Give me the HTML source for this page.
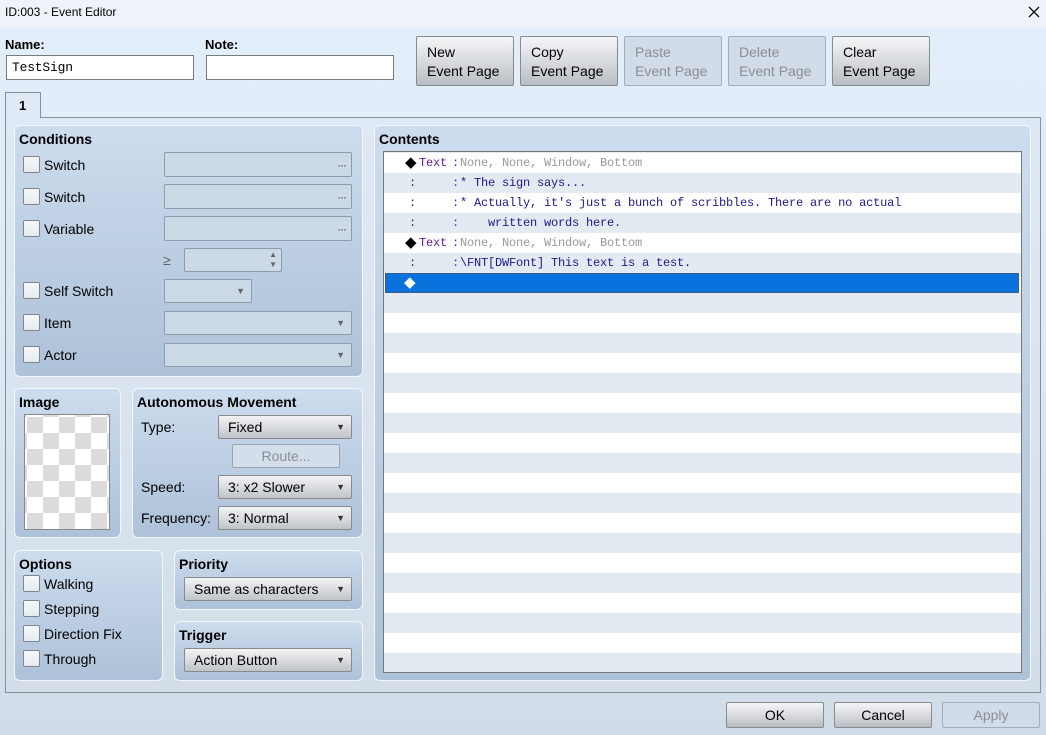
<!DOCTYPE html>
<html><head><meta charset="utf-8"><style>
*{box-sizing:border-box;margin:0;padding:0}
body{width:1046px;height:735px;overflow:hidden;font-family:"Liberation Sans","DejaVu Sans",sans-serif;font-size:13px;color:#000;position:relative;background:linear-gradient(#e4effc 0%,#dde8f4 50%,#d0dce8 100%)}
.a{position:absolute}
.title{left:0;top:0;width:1046px;height:27px;background:#eef3fa;font-size:12px;padding:5px 5px}
.lbl{font-weight:bold;font-size:13px}
.inp{background:#fff;border:1px solid #7a7a7a}
.btn{border:1px solid #8a8a8a;border-radius:2px;background:linear-gradient(#f4f5f6,#d8dbdf 50%,#b9bec4);font-size:14px;line-height:19px;padding:6px 0 0 10px}
.btn.dis{background:#d1dce8;color:#8a8f96;border-color:#a5adb6}
.grp{border:1px solid #f3f7fb;border-radius:6px;background:linear-gradient(#cddcee,#adc1d8)}
.gt{font-weight:bold;font-size:14px;position:absolute;left:4px;top:5px}
.cb{width:17px;height:17px;background:linear-gradient(#f6f8fa,#e6ebf0);border:1px solid #7d8591;border-radius:2px}
.fld{background:#ccd9e6;border:1px solid #8d9bab;border-radius:2px}
.dd{border:1px solid #8a8a8a;border-radius:2px;background:linear-gradient(#f2f3f5,#d9dce0 50%,#bfc4ca);font-size:14px;padding:3px 0 0 9px}
.arr{position:absolute;right:6px;top:6px;font-size:9px;color:#333}
.dots{position:absolute;right:5px;top:5px;font-size:12px;color:#444;letter-spacing:-1px}
.fld .arr{color:#666}
.mono{font-family:"Liberation Mono","DejaVu Sans Mono",monospace;font-size:12px;letter-spacing:-0.2px}
.row{position:absolute;left:1px;width:636px;height:20px}
.row span{position:absolute;top:3px;white-space:pre}
.dia{font-size:15px;top:0px!important;font-family:"DejaVu Sans",sans-serif}
</style></head><body>
<div class="a title">ID:003 - Event Editor</div>
<svg class="a" style="left:1028px;top:6px" width="12" height="12"><path d="M1 1L11 11M11 1L1 11" stroke="#111" stroke-width="1.3"/></svg>

<div class="a lbl" style="left:5px;top:37px">Name:</div>
<div class="a inp mono" style="left:6px;top:55px;width:188px;height:25px;padding:4px 5px;font-size:13px">TestSign</div>
<div class="a lbl" style="left:205px;top:37px">Note:</div>
<div class="a inp" style="left:206px;top:55px;width:188px;height:25px"></div>

<div class="a btn" style="left:416px;top:36px;width:98px;height:50px">New<br>Event Page</div>
<div class="a btn" style="left:520px;top:36px;width:98px;height:50px">Copy<br>Event Page</div>
<div class="a btn dis" style="left:624px;top:36px;width:98px;height:50px">Paste<br>Event Page</div>
<div class="a btn dis" style="left:728px;top:36px;width:98px;height:50px">Delete<br>Event Page</div>
<div class="a btn" style="left:832px;top:36px;width:98px;height:50px">Clear<br>Event Page</div>

<div class="a" style="left:5px;top:117px;width:1036px;height:576px;border:1px solid #8a8f96;background:linear-gradient(#dfe9f5,#d3dee9)"></div>
<div class="a" style="left:5px;top:92px;width:36px;height:26px;border:1px solid #8a8f96;border-bottom:none;background:#e0eaf6;font-weight:bold;padding:5px 0 0 13px">1</div>

<div class="a grp" style="left:14px;top:125px;width:349px;height:252px"><div class="gt">Conditions</div></div>
<div class="a cb" style="left:23px;top:156px"></div><div class="a" style="left:44px;top:157px;font-size:14px">Switch</div>
<div class="a fld" style="left:164px;top:152px;width:188px;height:25px"><span class="dots">···</span></div>
<div class="a cb" style="left:23px;top:188px"></div><div class="a" style="left:44px;top:189px;font-size:14px">Switch</div>
<div class="a fld" style="left:164px;top:184px;width:188px;height:25px"><span class="dots">···</span></div>
<div class="a cb" style="left:23px;top:220px"></div><div class="a" style="left:44px;top:221px;font-size:14px">Variable</div>
<div class="a fld" style="left:164px;top:216px;width:188px;height:25px"><span class="dots">···</span></div>
<div class="a" style="left:163px;top:252px;color:#666;font-size:14px">≥</div>
<div class="a fld" style="left:184px;top:248px;width:98px;height:24px"><span class="a" style="right:4px;top:1px;font-size:8px;color:#666;line-height:10px">▲<br>▼</span></div>
<div class="a cb" style="left:23px;top:282px"></div><div class="a" style="left:44px;top:283px;font-size:14px">Self Switch</div>
<div class="a fld" style="left:164px;top:279px;width:88px;height:24px"><span class="arr">▼</span></div>
<div class="a cb" style="left:23px;top:314px"></div><div class="a" style="left:44px;top:315px;font-size:14px">Item</div>
<div class="a fld" style="left:164px;top:311px;width:188px;height:24px"><span class="arr">▼</span></div>
<div class="a cb" style="left:23px;top:346px"></div><div class="a" style="left:44px;top:347px;font-size:14px">Actor</div>
<div class="a fld" style="left:164px;top:343px;width:188px;height:24px"><span class="arr">▼</span></div>

<div class="a grp" style="left:14px;top:388px;width:107px;height:150px"><div class="gt">Image</div></div>
<div class="a" style="left:24px;top:414px;width:86px;height:116px;border:1px solid #888;background-color:#fff;background-image:conic-gradient(#dcdcdc 25%,#fff 0 50%,#dcdcdc 0 75%,#fff 0);background-size:32px 32px;background-position:-14px 2px"></div>

<div class="a grp" style="left:132px;top:388px;width:231px;height:150px"><div class="gt">Autonomous Movement</div></div>
<div class="a" style="left:141px;top:419px;font-size:14px">Type:</div>
<div class="a dd" style="left:218px;top:415px;width:134px;height:24px">Fixed<span class="arr">▼</span></div>
<div class="a" style="left:232px;top:444px;width:108px;height:24px;border:1px solid #9aa3ad;border-radius:2px;background:#d3deea;color:#8a8f96;font-size:14px;text-align:center;padding-top:3px">Route...</div>
<div class="a" style="left:141px;top:479px;font-size:14px">Speed:</div>
<div class="a dd" style="left:218px;top:475px;width:134px;height:24px">3: x2 Slower<span class="arr">▼</span></div>
<div class="a" style="left:141px;top:510px;font-size:14px">Frequency:</div>
<div class="a dd" style="left:218px;top:506px;width:134px;height:24px">3: Normal<span class="arr">▼</span></div>

<div class="a grp" style="left:14px;top:550px;width:149px;height:131px"><div class="gt">Options</div></div>
<div class="a cb" style="left:23px;top:575px"></div><div class="a" style="left:44px;top:576px;font-size:14px">Walking</div>
<div class="a cb" style="left:23px;top:600px"></div><div class="a" style="left:44px;top:601px;font-size:14px">Stepping</div>
<div class="a cb" style="left:23px;top:625px"></div><div class="a" style="left:44px;top:626px;font-size:14px">Direction Fix</div>
<div class="a cb" style="left:23px;top:650px"></div><div class="a" style="left:44px;top:651px;font-size:14px">Through</div>

<div class="a grp" style="left:174px;top:550px;width:189px;height:60px"><div class="gt">Priority</div></div>
<div class="a dd" style="left:184px;top:577px;width:168px;height:24px">Same as characters<span class="arr">▼</span></div>
<div class="a grp" style="left:174px;top:621px;width:189px;height:60px"><div class="gt">Trigger</div></div>
<div class="a dd" style="left:184px;top:648px;width:168px;height:24px">Action Button<span class="arr">▼</span></div>

<div class="a grp" style="left:374px;top:125px;width:657px;height:556px"><div class="gt">Contents</div></div>
<div class="a mono" style="left:383px;top:151px;width:639px;height:522px;border:1px solid #777;background:repeating-linear-gradient(#fff 0 20px,#e3eaf2 20px 40px);background-position:0 1px;overflow:hidden">
 <div class="row" style="top:1px"><span class="dia" style="left:20px;color:#000">◆</span><span style="left:34px;color:#6a1a9a">Text</span><span style="left:67px;color:#3a3aaa">:</span><span style="left:75px;color:#999">None, None, Window, Bottom</span></div>
 <div class="row" style="top:21px"><span style="left:24px;color:#333">:</span><span style="left:67px;color:#3a3aaa">:</span><span style="left:75px;color:#1a1a8a">* The sign says...</span></div>
 <div class="row" style="top:41px"><span style="left:24px;color:#333">:</span><span style="left:67px;color:#3a3aaa">:</span><span style="left:75px;color:#1a1a8a">* Actually, it's just a bunch of scribbles. There are no actual</span></div>
 <div class="row" style="top:61px"><span style="left:24px;color:#333">:</span><span style="left:67px;color:#3a3aaa">:</span><span style="left:75px;color:#1a1a8a">    written words here.</span></div>
 <div class="row" style="top:81px"><span class="dia" style="left:20px;color:#000">◆</span><span style="left:34px;color:#6a1a9a">Text</span><span style="left:67px;color:#3a3aaa">:</span><span style="left:75px;color:#999">None, None, Window, Bottom</span></div>
 <div class="row" style="top:101px"><span style="left:24px;color:#333">:</span><span style="left:67px;color:#3a3aaa">:</span><span style="left:75px;color:#1a1a8a">\FNT[DWFont] This text is a test.</span></div>
 <div class="row" style="top:121px;left:1px;width:634px;background:#0a72dc;border:1px solid #3a5f8a"><span class="dia" style="left:18px;top:-1px!important;color:#fff">◆</span></div>
</div>

<div class="a btn" style="left:726px;top:702px;width:98px;height:26px;text-align:center;padding:3px 0 0">OK</div>
<div class="a btn" style="left:834px;top:702px;width:98px;height:26px;text-align:center;padding:3px 0 0">Cancel</div>
<div class="a btn dis" style="left:942px;top:702px;width:98px;height:26px;text-align:center;padding:3px 0 0">Apply</div>
</body></html>
